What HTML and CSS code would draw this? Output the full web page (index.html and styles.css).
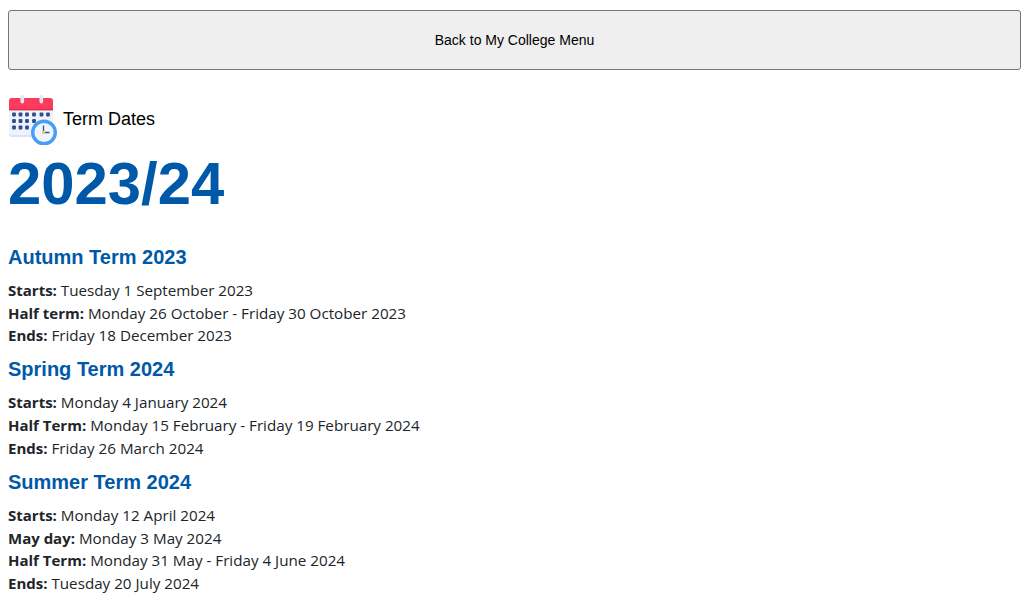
FILE: index.html
```html
<!DOCTYPE html>
<html lang="en">
<head>
<meta charset="utf-8">
<title>Term Dates</title>
<link rel="stylesheet" href="styles.css">
</head>
<body>
<button class="back-button" type="button">Back to My College Menu</button>
<div class="page-title">
  <svg class="cal-icon" width="50" height="50" viewBox="0 0 50 50" aria-hidden="true">
    <rect x="1" y="3" width="44" height="39" rx="3" fill="#d9e2f8"/>
    <rect x="1" y="3" width="44" height="37" rx="3" fill="#eef2fb"/>
    <path d="M1 14V6a3 3 0 0 1 3-3h38a3 3 0 0 1 3 3v8z" fill="#fb3a5c"/>
    <rect x="1" y="14" width="44" height="1.4" fill="#d92c4e"/>
    <rect x="12.5" y="0" width="3.6" height="8.5" rx="1.8" fill="#dfe6f7"/>
    <rect x="31.5" y="0" width="3.6" height="8.5" rx="1.8" fill="#dfe6f7"/>
    <g fill="#2f4c8f">
      <rect x="4.1" y="17.6" width="3.8" height="3.8" rx="1"/><rect x="10.6" y="17.6" width="3.8" height="3.8" rx="1"/><rect x="17.1" y="17.6" width="3.8" height="3.8" rx="1"/><rect x="24.1" y="17.6" width="3.8" height="3.8" rx="1"/><rect x="31.6" y="17.6" width="3.8" height="3.8" rx="1"/><rect x="38.1" y="17.6" width="3.8" height="3.8" rx="1"/>
      <rect x="4.1" y="24.1" width="3.8" height="3.8" rx="1"/><rect x="10.6" y="24.1" width="3.8" height="3.8" rx="1"/><rect x="17.1" y="24.1" width="3.8" height="3.8" rx="1"/><rect x="24.1" y="24.1" width="3.8" height="3.8" rx="1"/>
      <rect x="4.1" y="30.6" width="3.8" height="3.8" rx="1"/><rect x="10.6" y="30.6" width="3.8" height="3.8" rx="1"/><rect x="17.1" y="30.6" width="3.8" height="3.8" rx="1"/>
    </g>
    <circle cx="36" cy="37.5" r="11.3" fill="#edf5ff" stroke="#4a9df5" stroke-width="3.4"/>
    <path d="M35.5 30.5v7h6" fill="none" stroke="#33508f" stroke-width="1.3"/>
    <circle cx="35.5" cy="37.5" r="1.7" fill="#ffc83d"/>
  </svg>
  <span class="page-title-text">Term Dates</span>
</div>
<h1 class="year">2023/24</h1>
<section class="term">
  <h2 class="term-name">Autumn Term 2023</h2>
  <p class="dates"><b>Starts:</b> Tuesday 1 September 2023<br><b>Half term:</b> Monday 26 October - Friday 30 October 2023<br><b>Ends:</b> Friday 18 December 2023</p>
</section>
<section class="term">
  <h2 class="term-name">Spring Term 2024</h2>
  <p class="dates"><b>Starts:</b> Monday 4 January 2024<br><b>Half Term:</b> Monday 15 February - Friday 19 February 2024<br><b>Ends:</b> Friday 26 March 2024</p>
</section>
<section class="term">
  <h2 class="term-name">Summer Term 2024</h2>
  <p class="dates"><b>Starts:</b> Monday 12 April 2024<br><b>May day:</b> Monday 3 May 2024<br><b>Half Term:</b> Monday 31 May - Friday 4 June 2024<br><b>Ends:</b> Tuesday 20 July 2024</p>
</section>
</body>
</html>
```
FILE: styles.css
```css
html, body { background: #fff; }
body {
  margin: 0;
  padding: 10px 5px 0 8px;
  font-family: "Open Sans", sans-serif;
  font-size: 15.2px;
  line-height: 22.8px;
  color: #212529;
}
b { font-size: 15px; }
.back-button {
  display: block;
  width: 100%;
  height: 60px;
  background: #efefef;
  border: 1px solid #767676;
  border-radius: 3px;
  font-family: "Liberation Sans", Arial, sans-serif;
  font-size: 14px;
  color: #000;
}
.page-title {
  display: flex;
  align-items: center;
  gap: 5px;
  margin-top: 25px;
  height: 50px;
  font-family: "Liberation Sans", Arial, sans-serif;
  font-size: 18px;
  color: #000;
}
.cal-icon { display: block; flex: none; }
.page-title-text { position: relative; top: -1px; }
.year {
  margin: 5px 0 26.6px;
  font-family: "Liberation Sans", Arial, sans-serif;
  font-size: 59.8px;
  font-weight: 700;
  line-height: 68px;
  color: #0059a8;
}
.term-name {
  margin: 0 0 10.3px;
  font-family: "Liberation Sans", Arial, sans-serif;
  font-size: 20px;
  font-weight: 700;
  line-height: 24px;
  color: #0059a8;
}
.dates { margin: 0 0 9.8px; }
```
